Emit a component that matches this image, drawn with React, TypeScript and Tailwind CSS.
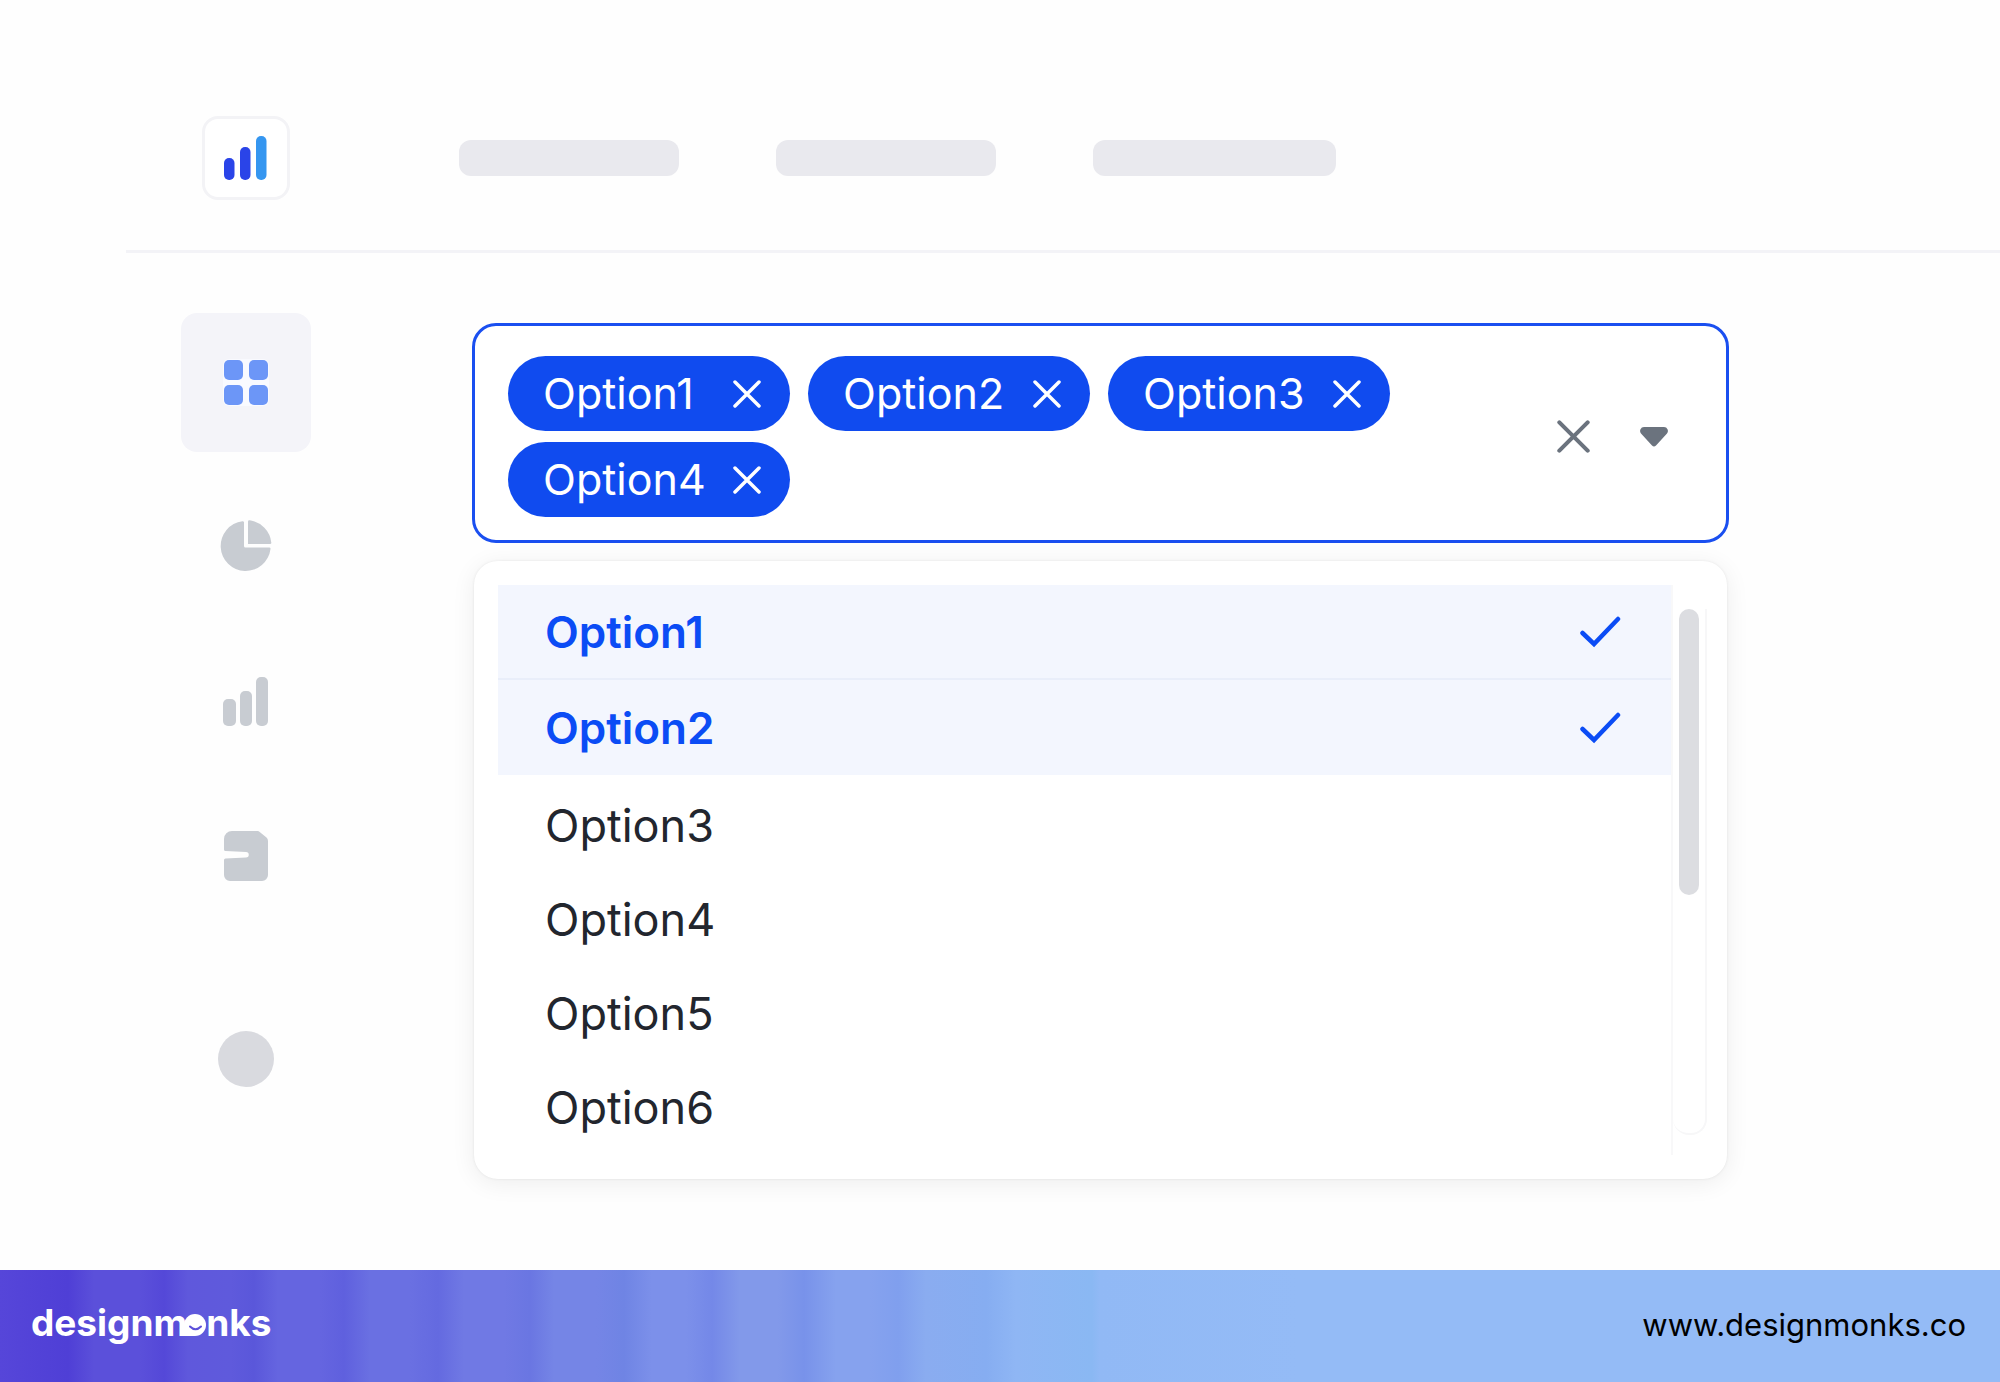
import React from "react";

const tags = ["Option1", "Option2", "Option3", "Option4"];

const selectedOptions = ["Option1", "Option2"];
const otherOptions = ["Option3", "Option4", "Option5", "Option6"];

function LogoIcon() {
  return (
    <svg width="44" height="44" viewBox="0 0 44 44" aria-hidden="true">
      <rect x="0" y="22" width="10.500" height="22" rx="5" fill="#2a44e8" />
      <rect x="16" y="11" width="10.500" height="33" rx="5" fill="#2a44e8" />
      <rect x="32" y="0" width="10.500" height="44" rx="5" fill="#3596f0" />
    </svg>
  );
}

function GridIcon() {
  return (
    <svg width="44" height="46" viewBox="0 0 44 46" className="overflow-visible" aria-hidden="true">
      <rect x="-1" y="-1" width="46" height="47" rx="6" fill="#f9faff" />
      <g fill="#6c96f7">
        <rect x="0" y="0" width="19" height="20" rx="5" />
        <rect x="25" y="0" width="19" height="20" rx="5" />
        <rect x="0" y="25" width="19" height="20" rx="5" />
        <rect x="25" y="25" width="19" height="20" rx="5" />
      </g>
    </svg>
  );
}

function PieIcon() {
  return (
    <svg width="52" height="52" viewBox="0 0 52 52" fill="#c8ccd2" aria-hidden="true">
      <path d="M24 2.2a1.4 1.4 0 0 0-1.6-1A25 25 0 1 0 50.500 29a1.400 1.400 0 0 0-1.400-1.600H25.500A1.500 1.500 0 0 1 24 25.900Z" />
      <path d="M28 1.800A1.500 1.500 0 0 1 29.800.300 25 25 0 0 1 51.300 22.500a1.300 1.300 0 0 1-1.300 1.500H28Z" />
    </svg>
  );
}

function BarsIcon() {
  return (
    <svg width="46" height="50" viewBox="0 0 46 50" fill="#c8ccd2" aria-hidden="true">
      <rect x="0" y="23" width="13" height="27" rx="5" />
      <rect x="17" y="15" width="12" height="35" rx="5" />
      <rect x="33" y="1" width="12" height="49" rx="5" />
    </svg>
  );
}

function FileIcon() {
  return (
    <svg width="44" height="50" viewBox="0 0 44 50" fill="#c8ccd2" aria-hidden="true">
      <path d="M8 0H33a4 4 0 0 1 3 1.200L42.500 6.500A5 5 0 0 1 44 10V44a6 6 0 0 1-6 6H6a6 6 0 0 1-6-6V29a1.500 1.500 0 0 1 1.500-1.500L22 26.500a2.500 2.500 0 0 0 0-5.500L1.500 20A1.500 1.500 0 0 1 0 18.500V8A8 8 0 0 1 8 0Z" />
    </svg>
  );
}

function CloseIcon({ className }: { className?: string }) {
  return (
    <svg viewBox="0 0 28 28" className={className} fill="none" stroke="currentColor" strokeWidth="3.500" strokeLinecap="round" aria-hidden="true">
      <path d="M2 2 26 26M26 2 2 26" />
    </svg>
  );
}

function CheckIcon() {
  return (
    <svg width="42" height="32" viewBox="0 0 42 32" fill="none" stroke="#0b4cf5" strokeWidth="4.500" strokeLinecap="round" aria-hidden="true">
      <path d="M3.500 17 15 28 39 3" />
    </svg>
  );
}

// The "o" of the wordmark: a head with a squared corner and a smile
function MonkFace() {
  return (
    <svg width="22" height="22" viewBox="0 0 22 22" className="-ml-[3px]" aria-hidden="true">
      <path d="M0 22V11A11 11 0 0 1 22 11 11 11 0 0 1 11 22Z" fill="#fff" />
      <path d="M6 12.500Q11.500 18 17 12.500" fill="none" stroke="#5c50da" strokeWidth="2" strokeLinecap="round" />
    </svg>
  );
}

function Header() {
  return (
    <header className="flex items-center border-b-3 border-[#f3f3f7] pt-[116px] pb-[50px] pl-[76px]">
      <a href="#" aria-label="Home" className="flex h-[84px] w-[88px] shrink-0 items-center justify-center rounded-2xl border-3 border-[#f3f3f6] bg-white">
        <LogoIcon />
      </a>
      <div className="ml-[169px] flex gap-[97px]">
        <div className="h-9 w-[220px] rounded-xl bg-[#e9e9ee]" />
        <div className="h-9 w-[220px] rounded-xl bg-[#e9e9ee]" />
        <div className="h-9 w-[243px] rounded-xl bg-[#e9e9ee]" />
      </div>
    </header>
  );
}

function Sidebar() {
  return (
    <nav aria-label="Main" className="flex w-[130px] shrink-0 flex-col items-center">
      <button aria-label="Dashboard" className="flex h-[139px] w-full items-center justify-center rounded-2xl bg-[#f4f4f9]">
        <GridIcon />
      </button>
      <div className="mt-[68px] flex flex-col gap-[103px]">
        <button aria-label="Reports" className="flex h-[52px] items-center justify-center">
          <PieIcon />
        </button>
        <button aria-label="Analytics" className="flex h-[52px] items-center justify-center">
          <BarsIcon />
        </button>
        <button aria-label="Files" className="flex h-[52px] items-center justify-center">
          <FileIcon />
        </button>
      </div>
      <button aria-label="Profile" className="mt-[149px] size-14 rounded-full bg-[#d9dadf]" />
    </nav>
  );
}

function MultiSelect() {
  return (
    <div className="flex rounded-3xl border-3 border-[#1a4ff0] bg-white pt-[30px] pr-[58px] pb-[23px] pl-[33px]">
      <div className="flex flex-1 flex-wrap gap-x-[18px] gap-y-[11px]">
        {tags.map((tag) => (
          <span key={tag} className="flex h-[75px] w-[282px] items-center justify-between rounded-full bg-[#104bef] pr-[29px] pl-[35px] text-[43px] leading-none text-white">
            {tag}
            <button aria-label={`Remove ${tag}`}>
              <CloseIcon className="size-[28px]" />
            </button>
          </span>
        ))}
      </div>
      <div className="flex shrink-0 items-center gap-[50px] text-[#6b737e]">
        <button aria-label="Clear all">
          <CloseIcon className="size-[33px]" />
        </button>
        <button aria-label="Toggle options">
          <svg width="28" height="20" viewBox="0 0 28 20" fill="currentColor" aria-hidden="true">
            <path d="M4 0H24A4 4 0 0 1 27 6.500L16 18.500a2.700 2.700 0 0 1-4 0L1 6.500A4 4 0 0 1 4 0Z" />
          </svg>
        </button>
      </div>
    </div>
  );
}

function OptionList() {
  return (
    <div className="mx-[2px] mt-[18px] flex rounded-3xl bg-white py-6 pr-5 pl-6 shadow-[0_0_3px_rgba(0,0,0,0.08),0_4px_24px_rgba(0,0,0,0.07)]">
      <div role="listbox" aria-multiselectable="true" aria-label="Options" className="flex flex-1 flex-col gap-1">
        <ul role="group" aria-label="Selected">
          {selectedOptions.map((option) => (
            <li key={option} role="option" aria-selected="true" className="flex h-[95px] items-center justify-between border-b-2 border-[#e9eefa] bg-[#f3f6fe] pr-[50px] pl-[47px] text-[44px] font-semibold text-[#0b4cf5] last:border-b-0">
              {option}
              <CheckIcon />
            </li>
          ))}
        </ul>
        <ul role="group" aria-label="Available">
          {otherOptions.map((option) => (
            <li key={option} role="option" aria-selected="false" className="flex h-[94px] items-center pl-[47px] text-[45px] text-[#22262e]">
              {option}
            </li>
          ))}
        </ul>
      </div>
      <div className="w-[36px] border-l-2 border-[#f8f8f9] pt-6 pb-5">
        <div className="flex h-full justify-center rounded-b-2xl border-r-2 border-b-2 border-[#f7f7f8]">
          <div className="h-[286px] w-5 rounded-full bg-[#dcdde1]" />
        </div>
      </div>
    </div>
  );
}

function Footer() {
  return (
    <footer className="flex h-28 items-baseline justify-between bg-[linear-gradient(to_right,#5646d9_0%,#4f3fd6_3.400%,#5b50da_4.700%,#5b50da_7%,#5448d8_8.200%,#5f58dc_9.400%,#5f5adc_11.500%,#5a57da_12.700%,#6565e0_13.900%,#6565e0_16%,#5f60de_17.200%,#6a70e2_18.500%,#6a70e2_20.500%,#646ae0_21.900%,#7079e4_23.200%,#7079e4_25.200%,#6a76e2_26.500%,#7585e6_27.700%,#7585e6_29.800%,#6f84e4_31.200%,#7c90ea_32.600%,#7c90ea_34.300%,#7488e8_35.600%,#8299ea_37%,#8299ea_38.900%,#7892ea_40.200%,#86a2ee_41.800%,#86a2ee_43.500%,#809fee_44.900%,#8aacf0_46.300%,#86adf1_49.300%,#8fb6f4_50.800%,#8ab8f3_54.600%,#91b9f5_55%,#94bbf6_65%)] pt-[34px] pr-[34px] pl-[31px]">
      <a href="#" aria-label="designmonks" className="flex items-baseline text-[37px] leading-none font-bold text-white">
        designm
        <MonkFace />
        nks
      </a>
      <a href="https://www.designmonks.co" className="text-[31px] leading-none text-black">
        www.designmonks.co
      </a>
    </footer>
  );
}

export default function App() {
  return (
    <div className="flex min-h-screen flex-col bg-[#fefefe] font-[Inter,sans-serif]">
      <div className="ml-[126px] flex-1">
        <Header />
        <main className="flex pt-[60px] pb-20 pl-[55px]">
          <Sidebar />
          <section className="mt-[10px] mr-[271px] ml-[161px] flex-1">
            <MultiSelect />
            <OptionList />
          </section>
        </main>
      </div>
      <Footer />
    </div>
  );
}
